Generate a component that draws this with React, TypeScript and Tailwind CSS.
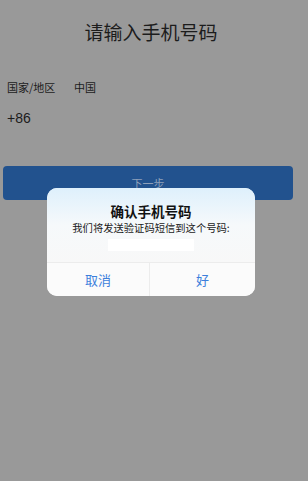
import React from "react";

export default function App() {
  const font = { fontFamily: '"Noto Sans CJK SC", "Noto Sans", sans-serif' };
  return (
    <div className="relative w-[308px] h-[481px] bg-[#999999] overflow-hidden" style={font}>
      <div className="pt-[22px] h-[42px] pr-[6px] text-center text-[19px] leading-[20px] text-[#1c1c1c]">请输入手机号码</div>
      <div className="mt-[38px] h-[14px] flex items-center px-[7px] text-[11px] leading-[14px] text-[#1c1c1c]">
        <span className="w-[67px]">国家/地区</span>
        <span>中国</span>
      </div>
      <div className="mt-[16px] h-[16px] px-[7px] text-[14px] leading-[16px] text-[#1c1c1c]" style={{ fontFamily: '"Liberation Sans", sans-serif' }}>+86</div>
      <div className="mt-[40px] ml-[3px] w-[290px] h-[34px] rounded-[4px] bg-[#22528e] flex items-center justify-center text-[11px] text-[#8ea0ba]">下一步</div>

      <div className="absolute left-[47px] top-[188px] w-[208px] h-[108px] rounded-[10px] overflow-hidden bg-[#fafafa] flex flex-col">
        <div className="h-[74px] bg-gradient-to-b from-[#def0fc] via-[#f6f9fb] to-[#f8f8f8] flex flex-col items-center">
          <div className="mt-[14px] h-[18px] text-[13.5px] leading-[18px] font-bold text-[#111]">确认手机号码</div>
          <div className="mt-[1px] h-[14px] text-[10.3px] leading-[14px] text-[#1a1a1a]">我们将发送验证码短信到这个号码:</div>
          <div className="mt-[4px] w-[86px] h-[12px] bg-white"></div>
        </div>
        <div className="flex-1 flex border-t border-[#ececec] bg-[#fbfbfb]">
          <div className="w-[103px] flex items-center justify-center text-[13px] text-[#3d7fdc] border-r border-[#ececec]">取消</div>
          <div className="flex-1 flex items-center justify-center text-[13px] text-[#3d7fdc]">好</div>
        </div>
      </div>
    </div>
  );
}
